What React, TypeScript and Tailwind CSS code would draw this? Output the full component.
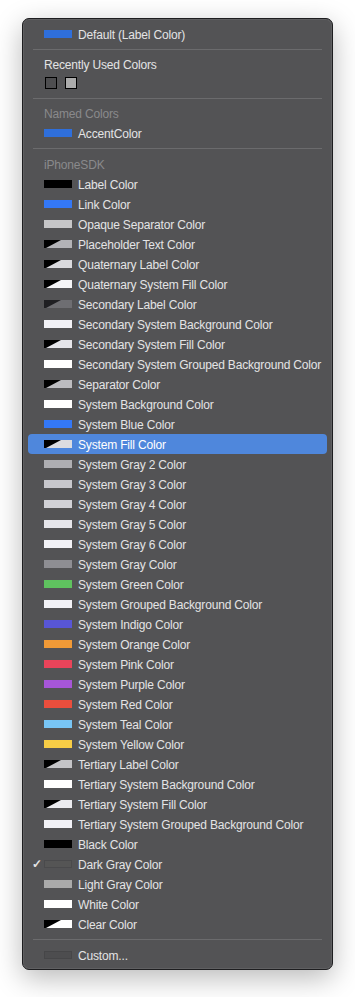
import React from "react";

type Swatch = { solid?: string; split?: string; dark?: string; border?: string };
type Item = { label: string; swatch: Swatch; checked?: boolean; active?: boolean };

const SDK_ITEMS: Item[] = [
  { label: "Label Color", swatch: { solid: "#000000" } },
  { label: "Link Color", swatch: { solid: "#3478f6" } },
  { label: "Opaque Separator Color", swatch: { solid: "#c6c6c8" } },
  { label: "Placeholder Text Color", swatch: { split: "#b3b3b7" } },
  { label: "Quaternary Label Color", swatch: { split: "#dadade" } },
  { label: "Quaternary System Fill Color", swatch: { split: "#f5f5f7" } },
  { label: "Secondary Label Color", swatch: { split: "#6e6e72", dark: "#1f1f22" } },
  { label: "Secondary System Background Color", swatch: { solid: "#f2f2f7" } },
  { label: "Secondary System Fill Color", swatch: { split: "#e5e5ea" } },
  { label: "Secondary System Grouped Background Color", swatch: { solid: "#ffffff" } },
  { label: "Separator Color", swatch: { split: "#bcbcc0" } },
  { label: "System Background Color", swatch: { solid: "#ffffff" } },
  { label: "System Blue Color", swatch: { solid: "#3478f6" } },
  { label: "System Fill Color", swatch: { split: "#dcdce0" }, active: true },
  { label: "System Gray 2 Color", swatch: { solid: "#aeaeb2" } },
  { label: "System Gray 3 Color", swatch: { solid: "#c7c7cc" } },
  { label: "System Gray 4 Color", swatch: { solid: "#d1d1d6" } },
  { label: "System Gray 5 Color", swatch: { solid: "#e5e5ea" } },
  { label: "System Gray 6 Color", swatch: { solid: "#f2f2f7" } },
  { label: "System Gray Color", swatch: { solid: "#8e8e93" } },
  { label: "System Green Color", swatch: { solid: "#5fc25f" } },
  { label: "System Grouped Background Color", swatch: { solid: "#f2f2f7" } },
  { label: "System Indigo Color", swatch: { solid: "#5856d6" } },
  { label: "System Orange Color", swatch: { solid: "#f19a37" } },
  { label: "System Pink Color", swatch: { solid: "#e9445a" } },
  { label: "System Purple Color", swatch: { solid: "#a656d8" } },
  { label: "System Red Color", swatch: { solid: "#ea4e3d" } },
  { label: "System Teal Color", swatch: { solid: "#78c5f5" } },
  { label: "System Yellow Color", swatch: { solid: "#f7cd46" } },
  { label: "Tertiary Label Color", swatch: { split: "#c4c4c7" } },
  { label: "Tertiary System Background Color", swatch: { solid: "#ffffff" } },
  { label: "Tertiary System Fill Color", swatch: { split: "#ebebef" } },
  { label: "Tertiary System Grouped Background Color", swatch: { solid: "#f2f2f7" } },
  { label: "Black Color", swatch: { solid: "#000000" } },
  { label: "Dark Gray Color", swatch: { solid: "#555555", border: "#4a4a4c" }, checked: true },
  { label: "Light Gray Color", swatch: { solid: "#aaaaaa" } },
  { label: "White Color", swatch: { solid: "#ffffff" } },
  { label: "Clear Color", swatch: { split: "#ffffff" } },
];

function ColorChip({ swatch }: { swatch: Swatch }) {
  if (swatch.split) {
    return (
      <svg width="28" height="8" viewBox="0 0 28 8" className="shrink-0 block">
        <rect x="0" y="0" width="28" height="8" fill={swatch.dark ?? "#000000"} />
        <polygon points="2,8 17,0 28,0 28,8" fill={swatch.split} />
      </svg>
    );
  }
  return (
    <span
      className="block h-[8px] w-[28px] shrink-0 border"
      style={{ background: swatch.solid, borderColor: swatch.border ?? swatch.solid }}
    />
  );
}

function Row({ item }: { item: Item }) {
  return (
    <div
      className={[
        "relative flex h-[20px] items-center rounded-[4px] pl-[16px]",
        item.active ? "bg-[#4f87dc] text-white" : "text-[#e4e4e5]",
      ].join(" ")}
    >
      {item.checked && (
        <span className="absolute left-[4px] top-[2px] text-[12px] font-bold leading-[16px] text-[#e4e4e5]">✓</span>
      )}
      <ColorChip swatch={item.swatch} />
      <span className="ml-[6px] translate-y-[1px] whitespace-nowrap">{item.label}</span>
    </div>
  );
}

function Separator({ h = 10 }: { h?: number }) {
  return (
    <div className={h === 11 ? "flex h-[11px] items-center px-[5px]" : "flex h-[10px] items-center px-[5px]"}>
      <div className="h-px w-full bg-[#6b6b6d]" />
    </div>
  );
}

export default function App() {
  return (
    <div className="min-h-[997px] bg-white pl-[22px] pt-[18px]">
      <div
        className="w-[311px] rounded-[7px] border border-[#1e1e20] bg-[#535355] px-[5px] pt-[5px] pb-[4px] text-[12px] leading-[20px] tracking-[-0.17px] shadow-[0_8px_28px_rgba(0,0,0,0.28),inset_0_0_0_1px_rgba(255,255,255,0.08)]"
        style={{ fontFamily: '"Liberation Sans", Arial, sans-serif' }}
      >
        <Row item={{ label: "Default (Label Color)", swatch: { solid: "#2f6fdb" } }} />
        <Separator />
        <div className="h-[20px] translate-y-[1px] pl-[16px] text-[#e4e4e5]">Recently Used Colors</div>
        <div className="flex h-[19px] gap-[8px] pl-[17px] pt-[3px]">
          <span className="block h-[12px] w-[12px] border border-black bg-[#4e4e50]" />
          <span className="block h-[12px] w-[12px] border border-black bg-[#ababab]" />
        </div>
        <Separator />
        <div className="h-[20px] translate-y-[1px] pl-[16px] text-[#8a8a8c]">Named Colors</div>
        <Row item={{ label: "AccentColor", swatch: { solid: "#2f6fdb" } }} />
        <Separator h={11} />
        <div className="h-[20px] translate-y-[1px] pl-[16px] text-[#8a8a8c]">iPhoneSDK</div>
        {SDK_ITEMS.map((item) => (
          <Row key={item.label} item={item} />
        ))}
        <Separator h={11} />
        <Row item={{ label: "Custom...", swatch: { solid: "#4d4d4f", border: "#464648" } }} />
      </div>
    </div>
  );
}
